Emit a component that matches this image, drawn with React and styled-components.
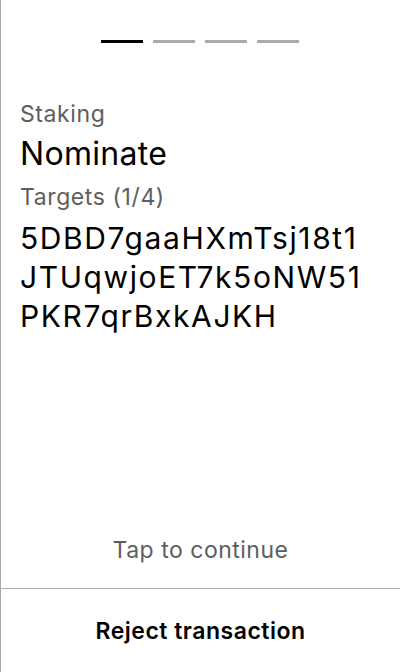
import React from "react";
import styled, { createGlobalStyle } from "styled-components";

const GlobalStyle = createGlobalStyle`
  html, body {
    margin: 0;
    padding: 0;
    background: #fff;
    font-family: Inter, "Noto Sans", sans-serif;
  }
`;

const Screen = styled.div`
  height: 672px;
  width: 400px;
  box-sizing: border-box;
  border-left: 1px solid #ababab;
  display: flex;
  flex-direction: column;
`;

const Progress = styled.div`
  display: flex;
  justify-content: center;
  gap: 10px;
  padding-top: 40px;
  padding-right: 1px;
`;

const Step = styled.div`
  width: 42px;
  height: 3px;
  background: ${(p) => (p.active ? "#000" : "#ababab")};
`;

const Body = styled.div`
  flex: 1;
  padding: 57px 19px 0 19px;
  display: flex;
  flex-direction: column;
`;

const Label = styled.div`
  font-size: 23px;
  line-height: 28px;
  letter-spacing: 0.6px;
  color: #5e5e5e;
  margin-top: ${(p) => p.gap || 0}px;
`;

const Title = styled.div`
  font-size: 32px;
  line-height: 40px;
  letter-spacing: 0.3px;
  color: #000;
  margin-top: 6px;
`;

const Address = styled.div`
  font-size: 30px;
  line-height: 39px;
  letter-spacing: 1.6px;
  color: #000;
  word-break: break-all;
  width: 350px;
  margin-top: 8px;
`;

const Hint = styled.div`
  margin-top: auto;
  text-align: center;
  font-size: 23px;
  line-height: 28px;
  letter-spacing: 0.5px;
  color: #5e5e5e;
  padding-bottom: 24px;
`;

const Footer = styled.button`
  height: 84px;
  border: none;
  border-top: 1px solid #ababab;
  background: #fff;
  font-family: Inter, "Noto Sans", sans-serif;
  font-size: 23px;
  font-weight: 600;
  letter-spacing: 0.5px;
  color: #000;
  padding: 0;
`;

export default function App() {
  const steps = [true, false, false, false];
  return (
    <>
      <GlobalStyle />
      <Screen>
        <Progress>
          {steps.map((active, i) => (
            <Step key={i} active={active} />
          ))}
        </Progress>
        <Body>
          <Label>Staking</Label>
          <Title>Nominate</Title>
          <Label gap={9}>Targets (1/4)</Label>
          <Address>5DBD7gaaHXmTsj18t1JTUqwjoET7k5oNW51PKR7qrBxkAJKH</Address>
          <Hint>Tap to continue</Hint>
        </Body>
        <Footer>Reject transaction</Footer>
      </Screen>
    </>
  );
}
